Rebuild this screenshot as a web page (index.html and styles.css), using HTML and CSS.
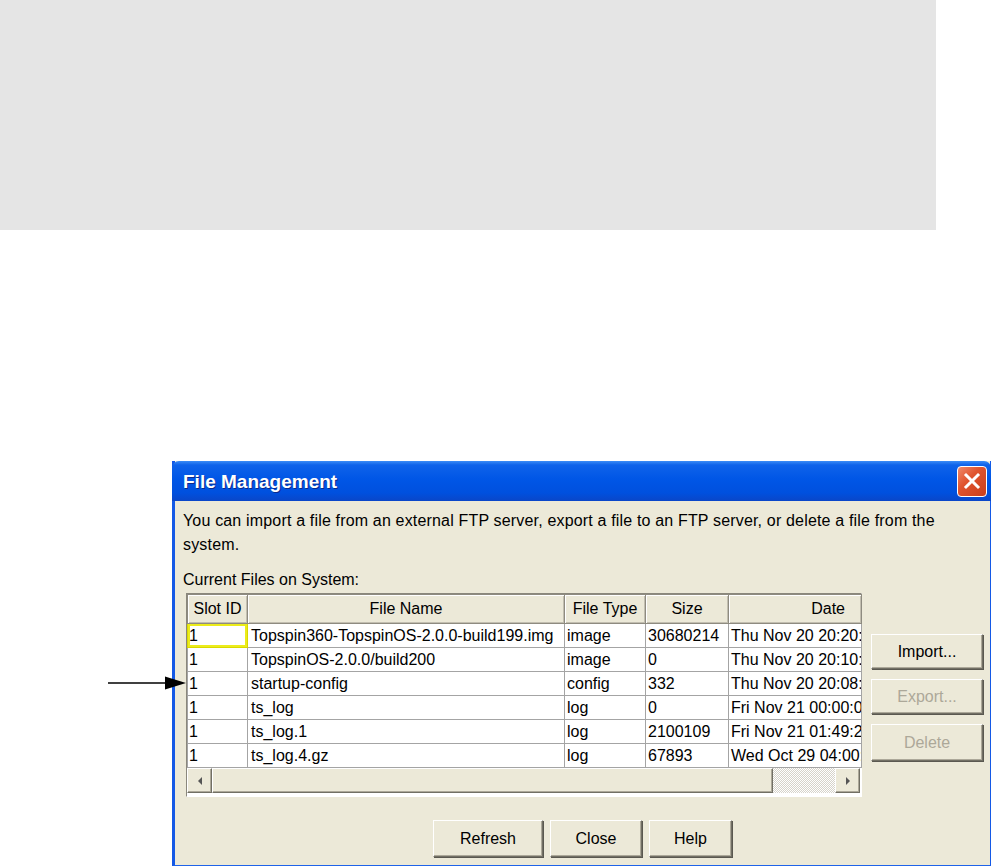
FILE: index.html
```html
<!DOCTYPE html>
<html lang="en">
<head>
    <meta charset="UTF-8">
    <title>File Management</title>
    <link rel="stylesheet" href="styles.css">
</head>
<body>
    <div class="backdrop"></div>

    <svg class="pointer" width="80" height="16" viewBox="0 0 80 16">
        <line x1="0" y1="8" x2="60" y2="8" stroke="#000" stroke-width="1.4"/>
        <polygon points="57,1.5 78,8 57,14.5" fill="#000"/>
    </svg>

    <div class="window">
        <div class="titlebar">
            <span class="title">File Management</span>
            <button class="close" title="Close">
                <svg width="20" height="20" viewBox="0 0 20 20">
                    <path d="M4 4 L16 16 M16 4 L4 16" stroke="#fff" stroke-width="3" stroke-linecap="square"/>
                </svg>
            </button>
        </div>

        <div class="content">
            <p class="intro">You can import a file from an external FTP server, export a file to an FTP server, or delete a file from the system.</p>
            <div class="label">Current Files on System:</div>

            <div class="files">
                <div class="grid-box">
                    <table class="grid">
                        <colgroup>
                            <col class="c-slot">
                            <col class="c-name">
                            <col class="c-type">
                            <col class="c-size">
                            <col class="c-date">
                        </colgroup>
                        <thead>
                            <tr>
                                <th>Slot ID</th>
                                <th>File Name</th>
                                <th>File Type</th>
                                <th>Size</th>
                                <th class="date-head">Date</th>
                            </tr>
                        </thead>
                        <tbody>
                            <tr>
                                <td class="focus">1</td>
                                <td>Topspin360-TopspinOS-2.0.0-build199.img</td>
                                <td>image</td>
                                <td>30680214</td>
                                <td>Thu Nov 20 20:20:14 2003</td>
                            </tr>
                            <tr>
                                <td>1</td>
                                <td>TopspinOS-2.0.0/build200</td>
                                <td>image</td>
                                <td>0</td>
                                <td>Thu Nov 20 20:10:33 2003</td>
                            </tr>
                            <tr>
                                <td>1</td>
                                <td>startup-config</td>
                                <td>config</td>
                                <td>332</td>
                                <td>Thu Nov 20 20:08:41 2003</td>
                            </tr>
                            <tr>
                                <td>1</td>
                                <td>ts_log</td>
                                <td>log</td>
                                <td>0</td>
                                <td>Fri Nov 21 00:00:02 2003</td>
                            </tr>
                            <tr>
                                <td>1</td>
                                <td>ts_log.1</td>
                                <td>log</td>
                                <td>2100109</td>
                                <td>Fri Nov 21 01:49:22 2003</td>
                            </tr>
                            <tr>
                                <td>1</td>
                                <td>ts_log.4.gz</td>
                                <td>log</td>
                                <td>67893</td>
                                <td>Wed Oct 29 04:00:01 2003</td>
                            </tr>
                        </tbody>
                    </table>

                    <div class="hscroll">
                        <div class="arrow-btn">
                            <svg width="8" height="10" viewBox="0 0 8 10"><polygon points="6,1 2,5 6,9" fill="#555"/></svg>
                        </div>
                        <div class="thumb"></div>
                        <div class="track"></div>
                        <div class="arrow-btn">
                            <svg width="8" height="10" viewBox="0 0 8 10"><polygon points="2,1 6,5 2,9" fill="#555"/></svg>
                        </div>
                    </div>
                </div>

                <div class="side">
                    <button class="btn side-btn">Import...</button>
                    <button class="btn side-btn" disabled>Export...</button>
                    <button class="btn side-btn tall" disabled>Delete</button>
                </div>
            </div>

            <div class="footer">
                <button class="btn refresh">Refresh</button>
                <button class="btn close-btn">Close</button>
                <button class="btn help">Help</button>
            </div>
        </div>
    </div>
</body>
</html>
```

FILE: styles.css
```css
html, body { margin: 0; padding: 0; background: #fff; overflow: hidden; }
body { font-family: "Liberation Sans", Arial, sans-serif; font-size: 16px; color: #000; }

.backdrop { width: 936px; height: 230px; background: #e5e5e5; }

.pointer { position: absolute; left: 108px; top: 675px; z-index: 2; }

.window {
    box-sizing: border-box;
    width: 819px;
    height: 405px;
    margin: 231px 0 0 172px;
    border-left: 3px solid #1459e6;
    border-right: 1px solid #1459e6;
    border-bottom: 1px solid #1f63e8;
    background: #ece9d8;
    display: flex;
    flex-direction: column;
}

.titlebar {
    height: 40px;
    margin-left: -3px;
    margin-right: -1px;
    border-radius: 7px 7px 0 0;
    background: linear-gradient(to bottom, #3b8cf6 0, #0f63ea 10%, #0056e6 45%, #0050de 80%, #0a46c8 100%);
    display: flex;
    align-items: center;
    justify-content: space-between;
    padding: 0 4px 0 11px;
}
.title {
    color: #fff;
    font-weight: bold;
    font-size: 19px;
    text-shadow: 1px 1px 0 #0c2a8a;
    margin-top: 1px;
}
.close {
    width: 30px;
    height: 31px;
    padding: 0;
    border: 1px solid #fff;
    border-radius: 4px;
    background: linear-gradient(135deg, #f08a6c 0, #e0542e 40%, #c93e1c 100%);
    display: flex;
    align-items: center;
    justify-content: center;
}

.content { padding: 8px 0 0 8px; flex: 1; display: flex; flex-direction: column; }

.intro { margin: 0; line-height: 24px; max-width: 790px; letter-spacing: 0.17px; }
.label { margin-top: 14px; line-height: 18px; }

.files { display: flex; margin: 4px 0 0 3px; }

.grid-box {
    width: 676px;
    box-sizing: border-box;
    border: 1px solid;
    border-color: #8a877c #fff #fff #8a877c;
    background: #fff;
    padding-bottom: 3px;
    display: flex;
    flex-direction: column;
}

.grid { table-layout: fixed; border-collapse: collapse; width: 674px; }
.c-slot { width: 60px; }
.c-name { width: 317px; }
.c-type { width: 81px; }
.c-size { width: 83px; }
.c-date { width: 133px; }

.grid th {
    height: 28px;
    padding: 0;
    font-weight: normal;
    background: #ece9d8;
    border: 1px solid #8e8b80;
    box-shadow: inset 1px 1px 0 #fff, inset -1px -1px 0 #c2beb0;
    text-align: center;
    white-space: nowrap;
    overflow: hidden;
}
.grid th.date-head { text-align: right; padding-right: 16px; }

.grid td {
    height: 23px;
    padding: 0 0 0 1px;
    border: 1px solid #a4a4a4;
    white-space: nowrap;
    overflow: hidden;
    line-height: 22px;
}
.grid td:nth-child(2) { padding-left: 3px; }
.grid td:nth-child(3), .grid td:nth-child(4), .grid td:nth-child(5) { padding-left: 2px; }
.grid td.focus { box-shadow: inset 0 0 0 2px #ecec1a; border-color: #d8d800; }

.hscroll { display: flex; height: 25px; flex: none; }
.arrow-btn, .thumb {
    box-sizing: border-box;
    background: #ece9d8;
    border: 1px solid;
    border-color: #fff #716f64 #716f64 #fff;
    box-shadow: inset -1px -1px 0 #aca899;
}
.arrow-btn { width: 25px; display: flex; align-items: center; justify-content: center; }
.thumb { width: 561px; }
.track {
    width: 62px;
    background: repeating-conic-gradient(#fff 0 25%, #d6d3ca 0 50%) 0 0 / 2px 2px;
}

.btn {
    font-family: "Liberation Sans", Arial, sans-serif;
    font-size: 16px;
    color: #000;
    background: #ece9d8;
    box-sizing: border-box;
    border: 1px solid;
    border-color: #fff #716f64 #716f64 #fff;
    box-shadow: inset -1px -1px 0 #aca899, 1px 1px 0 #5a5850;
    padding: 0;
}
.btn:disabled { color: #aca899; }

.side { display: flex; flex-direction: column; gap: 10px; margin: 41px 0 0 9px; }
.side-btn { width: 112px; height: 35px; }
.side-btn.tall { height: 37px; }

.footer { display: flex; justify-content: center; gap: 7px; margin-top: 23px; padding-right: 8px; }
.footer .btn { height: 37px; }
.refresh { width: 110px; }
.close-btn { width: 92px; }
.help { width: 83px; }
```
